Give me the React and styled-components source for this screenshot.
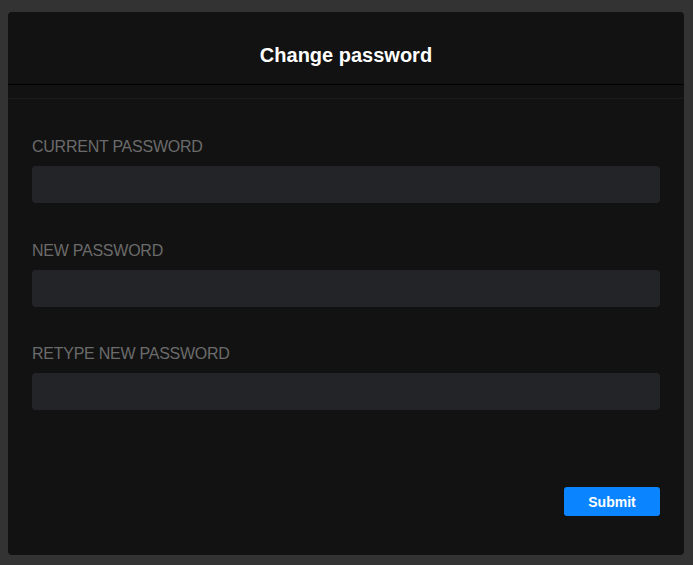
import React from "react";
import styled, { createGlobalStyle } from "styled-components";

const Global = createGlobalStyle`
  html, body { margin: 0; padding: 0; background: #333333; }
  body { font-family: "Liberation Sans", Arial, sans-serif; }
  * { box-sizing: border-box; }
`;

const Page = styled.div`
  width: 693px;
  height: 565px;
  padding: 12px 9px 10px 8px;
  display: flex;
`;

const Modal = styled.div`
  flex: 1;
  background: #121212;
  border-radius: 4px;
  display: flex;
  flex-direction: column;
  overflow: hidden;
`;

const Header = styled.div`
  height: 73px;
  border-bottom: 1px solid #000;
  display: flex;
  align-items: center;
  justify-content: center;
  padding-top: 14px;
`;

const Title = styled.h1`
  margin: 0;
  font-size: 20px;
  font-weight: 700;
  color: #ffffff;
`;

const Divider = styled.div`
  height: 14px;
  border-bottom: 1px solid #1b1b1b;
`;

const Body = styled.div`
  flex: 1;
  display: flex;
  flex-direction: column;
  padding: 39px 24px 39px 24px;
`;

const Field = styled.div`
  display: flex;
  flex-direction: column;
  gap: 10px;
  margin-bottom: 38.5px;
`;

const Label = styled.label`
  font-size: 16px;
  line-height: 18px;
  color: #6b6b6b;
  text-transform: uppercase;
  letter-spacing: -0.25px;
`;

const Input = styled.input`
  height: 37px;
  border: none;
  border-radius: 4px;
  background: #232428;
  outline: none;
  color: #fff;
  padding: 0 12px;
  font-family: inherit;
  font-size: 15px;
`;

const Footer = styled.div`
  margin-top: auto;
  display: flex;
  justify-content: flex-end;
`;

const Button = styled.button`
  width: 96px;
  height: 29px;
  border: none;
  border-radius: 3px;
  background: #0a84ff;
  color: #fff;
  font-family: inherit;
  font-weight: 700;
  font-size: 14px;
  cursor: pointer;
`;

const fields = ["Current password", "New password", "Retype new password"];

export default function App() {
  return (
    <>
      <Global />
      <Page>
        <Modal>
          <Header>
            <Title>Change password</Title>
          </Header>
          <Divider />
          <Body>
            {fields.map((f) => (
              <Field key={f}>
                <Label>{f}</Label>
                <Input type="password" />
              </Field>
            ))}
            <Footer>
              <Button>Submit</Button>
            </Footer>
          </Body>
        </Modal>
      </Page>
    </>
  );
}
